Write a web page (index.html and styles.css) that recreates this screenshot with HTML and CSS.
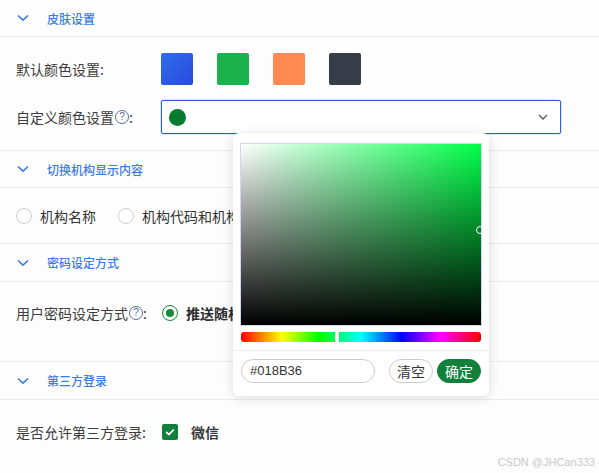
FILE: index.html
```html
<!DOCTYPE html>
<html lang="zh">
<head>
<meta charset="utf-8">
<link rel="stylesheet" href="styles.css">
</head>
<body>
<div class="page">
  <div class="sec-head">
    <svg class="chev" width="12" height="8" viewBox="0 0 12 8"><path d="M1 1.5 L6 6.2 L11 1.5" fill="none" stroke="#3b7ae8" stroke-width="1.6"/></svg>
    <span>皮肤设置</span>
  </div>
  <div class="sec-body s1">
    <div class="row">
      <div class="label">默认颜色设置:</div>
      <div class="swatches">
        <span class="sw sw-blue"></span>
        <span class="sw sw-green"></span>
        <span class="sw sw-orange"></span>
        <span class="sw sw-dark"></span>
      </div>
    </div>
    <div class="row">
      <div class="label">自定义颜色设置<span class="q">?</span>:</div>
      <div class="select">
        <span class="dot"></span>
        <svg class="sel-chev" width="10" height="6" viewBox="0 0 10 6"><path d="M1 1 L5 5 L9 1" fill="none" stroke="#555" stroke-width="1.3"/></svg>
      </div>
    </div>
  </div>

  <div class="sec-head">
    <svg class="chev" width="12" height="8" viewBox="0 0 12 8"><path d="M1 1.5 L6 6.2 L11 1.5" fill="none" stroke="#3b7ae8" stroke-width="1.6"/></svg>
    <span>切换机构显示内容</span>
  </div>
  <div class="sec-body s2">
    <div class="radios">
      <label class="radio"><span class="rc"></span>机构名称</label>
      <label class="radio"><span class="rc"></span>机构代码和机构名称</label>
    </div>
  </div>

  <div class="sec-head h3">
    <svg class="chev" width="12" height="8" viewBox="0 0 12 8"><path d="M1 1.5 L6 6.2 L11 1.5" fill="none" stroke="#3b7ae8" stroke-width="1.6"/></svg>
    <span>密码设定方式</span>
  </div>
  <div class="sec-body s3">
    <div class="row">
      <div class="label">用户密码设定方式<span class="q">?</span>:</div>
      <label class="radio on"><span class="rc"></span>推送随机密码</label>
    </div>
  </div>

  <div class="sec-head h3">
    <svg class="chev" width="12" height="8" viewBox="0 0 12 8"><path d="M1 1.5 L6 6.2 L11 1.5" fill="none" stroke="#3b7ae8" stroke-width="1.6"/></svg>
    <span>第三方登录</span>
  </div>
  <div class="sec-body s4">
    <div class="row">
      <div class="label">是否允许第三方登录:</div>
      <label class="check"><span class="cb"><svg width="10" height="8" viewBox="0 0 10 8"><path d="M1.2 4 L4 6.5 L8.8 1.5" fill="none" stroke="#fff" stroke-width="1.8"/></svg></span>微信</label>
    </div>
  </div>

  <div class="picker">
    <div class="sv"><span class="sv-thumb"></span></div>
    <div class="hue"><span class="hue-thumb"></span></div>
    <div class="picker-foot">
      <div class="hex">#018B36</div>
      <button class="btn btn-clear">清空</button>
      <button class="btn btn-ok">确定</button>
    </div>
  </div>

  <div class="wm">CSDN @JHCan333</div>
</div>
</body>
</html>
```

FILE: styles.css
```css
html, body {
  margin: 0;
  padding: 0;
  background: #fdfdfd;
}
body {
  font-family: "Noto Sans CJK SC", "Noto Sans", sans-serif;
  color: #3a3a3a;
  width: 599px;
  height: 473px;
  overflow: hidden;
}
.page {
  position: relative;
  width: 599px;
  height: 473px;
}
.sec-head {
  height: 36px;
  display: flex;
  align-items: center;
  padding-left: 17px;
  border-bottom: 1px solid #ececec;
  color: #3b7ae8;
  font-size: 12px;
  font-weight: 500;
}
.sec-head.h3 { height: 37px; }
.sec-head .chev {
  margin-right: 18px;
}
.sec-body {
  display: flex;
  flex-direction: column;
  border-bottom: 1px solid #ececec;
}
.s1 { padding: 16px 0 16px; gap: 15px; height: 81px; }
.s2 { height: 55px; justify-content: center; }
.s3 { height: 80px; padding-top: 21px; box-sizing: border-box; }
.s4 { height: 72px; padding-top: 22px; box-sizing: border-box; border-bottom: none; }
.row {
  display: flex;
  align-items: center;
}
.label {
  flex: 0 0 161px;
  width: 161px;
  padding-left: 16px;
  box-sizing: border-box;
  font-size: 14px;
  color: #3c3c3c;
  display: flex;
  align-items: center;
  white-space: nowrap;
}
.q {
  display: inline-flex;
  width: 14px;
  height: 14px;
  border: 1.2px solid #5a6f96;
  border-radius: 50%;
  box-sizing: border-box;
  font-size: 10px;
  line-height: 1;
  align-items: center;
  justify-content: center;
  color: #5a6f96;
  margin-left: 1px;
  font-family: "Liberation Sans", sans-serif;
}
.swatches {
  display: flex;
  gap: 24px;
}
.sw {
  width: 32px;
  height: 32px;
  border-radius: 2px;
  display: block;
}
.sw-blue { background: linear-gradient(135deg, #2e6ee6, #2a48e0); }
.sw-green { background: #1bb24e; }
.sw-orange { background: #ff8a52; }
.sw-dark { background: #363d48; }
.select {
  width: 400px;
  height: 34px;
  box-sizing: border-box;
  border: 1px solid #2a5fe3;
  border-radius: 2px;
  box-shadow: 0 0 0 1px rgba(42, 95, 227, 0.15);
  display: flex;
  align-items: center;
  justify-content: space-between;
  padding: 0 12px 0 7px;
  background: #fff;
}
.dot {
  width: 17px;
  height: 17px;
  border-radius: 50%;
  background: #067d2e;
}
.radios {
  display: flex;
  gap: 22px;
  padding-left: 16px;
}
.radio {
  display: flex;
  align-items: center;
  font-size: 14px;
  color: #333;
  white-space: nowrap;
}
.radio .rc {
  width: 16px;
  height: 16px;
  border: 1px solid #cfcfcf;
  border-radius: 50%;
  box-sizing: border-box;
  margin-right: 8px;
  background: #fff;
}
.radio.on {
  font-weight: 700;
  color: #2e2e2e;
}
.radio.on .rc {
  border: 1.5px solid #148a3a;
  display: flex;
  align-items: center;
  justify-content: center;
  margin-left: 1px;
}
.radio.on .rc::after {
  content: "";
  width: 8px;
  height: 8px;
  border-radius: 50%;
  background: #148a3a;
}
.check {
  display: flex;
  align-items: center;
  font-size: 14px;
  font-weight: 700;
  color: #3a3a3a;
  margin-left: 1px;
}
.cb {
  width: 16px;
  height: 16px;
  border-radius: 2px;
  background: #12803a;
  display: flex;
  align-items: center;
  justify-content: center;
  margin-right: 13px;
}
.picker {
  position: absolute;
  left: 233px;
  top: 133px;
  width: 256px;
  height: 263px;
  background: #fff;
  border-radius: 6px;
  box-shadow: 0 2px 12px rgba(0, 0, 0, 0.13);
  box-sizing: border-box;
  padding: 10px 7px 0 7px;
  display: flex;
  flex-direction: column;
}
.sv {
  position: relative;
  height: 183px;
  width: 242px;
  box-sizing: border-box;
  border: 1.5px solid #cfd8ea;
  background:
    linear-gradient(to top, #000, rgba(0, 0, 0, 0)),
    linear-gradient(to right, #fff, #00ff48);
}
.sv-thumb {
  position: absolute;
  left: 235px;
  top: 82px;
  width: 6px;
  height: 6px;
  border: 1px solid #fff;
  border-radius: 50%;
}
.hue {
  position: relative;
  margin: 6px 1px 0 1px;
  height: 10px;
  border-radius: 3px;
  background: linear-gradient(to right, #f00 0%, #ff0 17%, #0f0 33%, #0ff 50%, #00f 67%, #f0f 83%, #f00 100%);
}
.hue-thumb {
  position: absolute;
  left: 94px;
  top: 0;
  width: 4px;
  height: 10px;
  background: #fff;
  border-radius: 1px;
  box-shadow: 0 0 1px rgba(0, 0, 0, 0.4);
}
.picker-foot {
  margin: 8px -7px 0 -7px;
  border-top: 1px solid #eeeeee;
  padding: 8px 8px 0 8px;
  display: flex;
  align-items: center;
}
.hex {
  width: 134px;
  height: 24px;
  box-sizing: border-box;
  border: 1px solid #cccccc;
  border-radius: 12px;
  font-family: "Liberation Sans", sans-serif;
  font-size: 13px;
  color: #333;
  line-height: 22px;
  padding-left: 8px;
  margin-right: 14px;
}
.btn {
  height: 24px;
  border-radius: 12px;
  font-family: "Noto Sans CJK SC", sans-serif;
  font-size: 14px;
  padding: 0;
  width: 44px;
  line-height: 22px;
}
.btn-clear {
  background: #fff;
  border: 1px solid #cccccc;
  color: #333;
}
.btn-ok {
  margin-left: 4px;
  background: #12803a;
  border: 1px solid #12803a;
  color: #fff;
}
.wm {
  position: absolute;
  right: 4px;
  bottom: 5px;
  font-family: "Liberation Sans", sans-serif;
  font-size: 11px;
  color: #c9c9c9;
}
```
